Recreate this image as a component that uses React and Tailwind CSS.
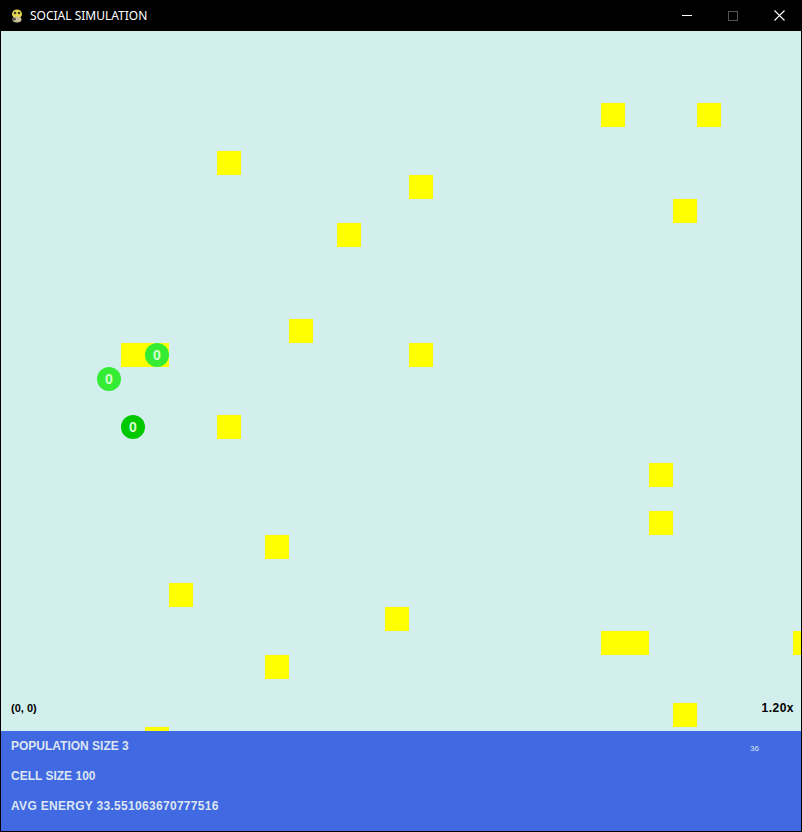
import React from 'react';

const CELL = 24;

// food squares on the grid: [col, row, width in cells]
const food = [
    [25, 3, 1], [29, 3, 1], [9, 5, 1], [17, 6, 1], [28, 7, 1], [14, 8, 1],
    [12, 12, 1], [5, 13, 2], [17, 13, 1], [9, 16, 1], [27, 18, 1], [27, 20, 1],
    [11, 21, 1], [7, 23, 1], [16, 24, 1], [25, 25, 2], [33, 25, 1], [11, 26, 1],
    [28, 28, 1], [6, 29, 1],
];

const agents = [
    { col: 6, row: 13, color: '#35ec35' },
    { col: 4, row: 14, color: '#35ec35' },
    { col: 5, row: 16, color: '#00c800' },
];

function PygameIcon() {
    return (
        <svg width="16" height="16" viewBox="0 0 16 16">
            <ellipse cx="8" cy="6" rx="5" ry="4.5" fill="#e8d84a" />
            <circle cx="6" cy="5" r="1.3" fill="#3a3a3a" />
            <circle cx="10" cy="5" r="1.3" fill="#3a3a3a" />
            <ellipse cx="8" cy="11.5" rx="4.5" ry="3" fill="#c9c29a" />
            <ellipse cx="5" cy="11" rx="2" ry="1.5" fill="#555" />
        </svg>
    );
}

export default function App() {
    return (
        <div className="w-[802px] h-[832px] bg-black flex flex-col" style={{ fontFamily: '"Liberation Sans", Arial, sans-serif' }}>
            {/* title bar */}
            <div className="h-[31px] flex items-center text-white shrink-0">
                <div className="w-[30px] flex justify-center pl-[3px]">
                    <PygameIcon />
                </div>
                <span className="text-[12px] flex-1" style={{ fontFamily: '"Noto Sans", sans-serif' }}>SOCIAL SIMULATION</span>
                <div className="flex h-full">
                    <div className="w-[46px] flex items-center justify-center">
                        <div className="w-[10px] h-px bg-white" />
                    </div>
                    <div className="w-[46px] flex items-center justify-center">
                        <div className="w-[10px] h-[10px] border border-[#555]" />
                    </div>
                    <div className="w-[46px] flex items-center justify-center">
                        <svg width="11" height="11" viewBox="0 0 11 11">
                            <path d="M0.5 0.5L10.5 10.5M10.5 0.5L0.5 10.5" stroke="white" strokeWidth="1.1" />
                        </svg>
                    </div>
                </div>
            </div>

            <div className="flex-1 flex flex-col px-px pb-px">
                {/* world canvas */}
                <div className="relative h-[700px] bg-[#d2efee] overflow-hidden">
                    {food.map(([c, r, w], i) => (
                        <div
                            key={i}
                            className="absolute bg-[#ffff00]"
                            style={{ left: c * CELL, top: r * CELL, width: w * CELL, height: CELL }}
                        />
                    ))}
                    {agents.map((a, i) => (
                        <div
                            key={i}
                            className="absolute w-[24px] h-[24px] rounded-full flex items-center justify-center text-[14px] font-bold text-[#d8ffd0]"
                            style={{ left: a.col * CELL, top: a.row * CELL, backgroundColor: a.color }}
                        >
                            0
                        </div>
                    ))}
                    <span className="absolute left-[10px] top-[669px] text-[11px] font-bold text-black">(0, 0)</span>
                    <span className="absolute right-[7px] top-[668px] text-[12px] font-bold text-black tracking-[0.5px]">1.20x</span>
                </div>

                {/* stats panel */}
                <div className="relative flex-1 bg-[#4169e1] text-[#dde6f2] text-[12px] leading-[18px] font-bold pl-[10px] pt-[6px] flex flex-col gap-[12px]">
                    <div>POPULATION SIZE 3</div>
                    <div>CELL SIZE 100</div>
                    <div className="tracking-[0.3px]">AVG ENERGY 33.551063670777516</div>
                    <span className="absolute left-[749px] top-[9px] text-[8px] font-normal">36</span>
                </div>
            </div>
        </div>
    );
}
